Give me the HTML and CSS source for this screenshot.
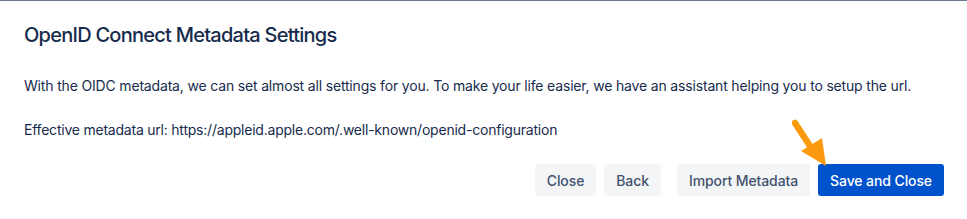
FILE: index.html
```html
<!DOCTYPE html>
<html>
<head>
<meta charset="utf-8">
<link rel="stylesheet" href="styles.css">
</head>
<body>
<div class="dialog">
  <h1 class="title">OpenID Connect Metadata Settings</h1>
  <div class="content">
    <p class="text">With the OIDC metadata, we can set almost all settings for you. To make your life easier, we have an assistant helping you to setup the url.</p>
    <p class="text">Effective metadata url: https://appleid.apple.com/.well-known/openid-configuration</p>
  </div>
  <div class="footer">
    <div class="group">
      <button class="btn">Close</button>
      <button class="btn">Back</button>
    </div>
    <div class="group">
      <button class="btn">Import Metadata</button>
      <button class="btn primary">Save and Close</button>
    </div>
  </div>
  <svg class="arrow" width="40" height="52" viewBox="0 0 40 52">
    <line x1="3" y1="4" x2="18" y2="27" stroke="#fb9a0e" stroke-width="6.5" stroke-linecap="round"/>
    <polygon points="9,32 30,19 34,47" fill="#fb9a0e"/>
  </svg>
</div>
</body>
</html>
```

FILE: styles.css
```css
html, body {
  margin: 0;
  padding: 0;
  background: #ffffff;
}
body {
  font-family: Inter, "Noto Sans", sans-serif;
  color: #172b4d;
  border-top: 1px solid #6b778c;
}
.dialog {
  position: relative;
  padding: 22px 23px 0 24px;
}
.title {
  margin: 0;
  font-size: 20px;
  line-height: 24px;
  font-weight: 500;
  color: #172b4d;
  letter-spacing: -0.75px;
}
.content {
  padding-top: 29px;
  display: flex;
  flex-direction: column;
  gap: 24px;
}
.text {
  margin: 0;
  font-size: 14px;
  line-height: 20px;
  letter-spacing: -0.17px;
}
.text + .text {
  letter-spacing: -0.22px;
}
.footer {
  display: flex;
  justify-content: flex-end;
  gap: 16px;
  margin-top: 24px;
}
.group {
  display: flex;
  gap: 8px;
}
.btn {
  font-family: inherit;
  font-size: 14px;
  font-weight: 500;
  letter-spacing: -0.1px;
  height: 32px;
  padding: 0 12px;
  border: none;
  border-radius: 3px;
  background: #f4f5f7;
  color: #42526e;
  cursor: pointer;
}
.btn.primary {
  background: #0052cc;
  color: #ffffff;
}
.arrow {
  position: absolute;
  left: 792px;
  top: 118px;
}
```
